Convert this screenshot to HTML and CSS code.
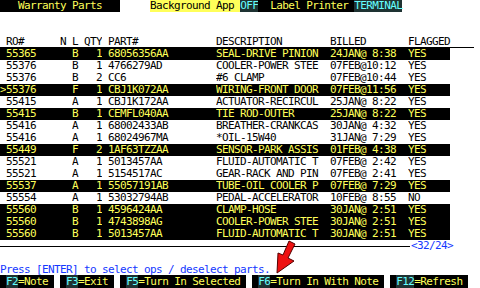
FILE: index.html
```html
<!DOCTYPE html>
<html>
<head>
<meta charset="utf-8">
<link rel="stylesheet" href="styles.css">
</head>
<body>
<div class="screen">
  <div class="line title"><span class="blk">   Warranty Parts   </span>     <span class="inv">Background App </span><span class="val">OFF</span><span class="blk">  Label Printer </span><span class="val">TERMINAL</span></div>
  <div class="line"></div>
  <div class="line"></div>
  <div class="grid head"><span></span><span>RO#</span><span>N</span><span>L</span><span>QTY</span><span class="part">PART#</span><span>DESCRIPTION</span><span>BILLED</span><span>FLAGGED</span></div>
  <div class="rows">
    <div class="grid sel"><span></span><span>55365</span><span></span><span>B</span><span class="qty">1</span><span class="part">68056356AA</span><span>SEAL-DRIVE PINION</span><span>24JAN@ 8:38</span><span>YES</span></div>
    <div class="grid"><span></span><span>55376</span><span></span><span>B</span><span class="qty">1</span><span class="part">4766279AD</span><span>COOLER-POWER STEE</span><span>07FEB@10:12</span><span>YES</span></div>
    <div class="grid"><span></span><span>55376</span><span></span><span>B</span><span class="qty">2</span><span class="part">CC6</span><span>#6 CLAMP</span><span>07FEB@10:44</span><span>YES</span></div>
    <div class="grid sel"><span>&gt;</span><span>55376</span><span></span><span>F</span><span class="qty">1</span><span class="part">CBJ1K072AA</span><span>WIRING-FRONT DOOR</span><span>07FEB@11:56</span><span>YES</span></div>
    <div class="grid"><span></span><span>55415</span><span></span><span>A</span><span class="qty">1</span><span class="part">CBJ1K172AA</span><span>ACTUATOR-RECIRCUL</span><span>25JAN@ 8:22</span><span>YES</span></div>
    <div class="grid sel"><span></span><span>55415</span><span></span><span>B</span><span class="qty">1</span><span class="part">CEMFL040AA</span><span>TIE ROD-OUTER</span><span>25JAN@ 8:22</span><span>YES</span></div>
    <div class="grid"><span></span><span>55416</span><span></span><span>A</span><span class="qty">1</span><span class="part">68002433AB</span><span>BREATHER-CRANKCAS</span><span>30JAN@ 4:32</span><span>YES</span></div>
    <div class="grid"><span></span><span>55416</span><span></span><span>A</span><span class="qty">1</span><span class="part">68024967MA</span><span>*OIL-15W40</span><span>31JAN@ 7:29</span><span>YES</span></div>
    <div class="grid sel"><span></span><span>55449</span><span></span><span>F</span><span class="qty">2</span><span class="part">1AF63TZZAA</span><span>SENSOR-PARK ASSIS</span><span>01FEB@ 4:38</span><span>YES</span></div>
    <div class="grid"><span></span><span>55521</span><span></span><span>A</span><span class="qty">1</span><span class="part">5013457AA</span><span>FLUID-AUTOMATIC T</span><span>07FEB@ 2:42</span><span>YES</span></div>
    <div class="grid"><span></span><span>55521</span><span></span><span>A</span><span class="qty">1</span><span class="part">5154517AC</span><span>GEAR-RACK AND PIN</span><span>07FEB@ 2:41</span><span>YES</span></div>
    <div class="grid sel"><span></span><span>55537</span><span></span><span>A</span><span class="qty">1</span><span class="part">55057191AB</span><span>TUBE-OIL COOLER P</span><span>07FEB@ 7:29</span><span>YES</span></div>
    <div class="grid"><span></span><span>55554</span><span></span><span>A</span><span class="qty">1</span><span class="part">53032794AB</span><span>PEDAL-ACCELERATOR</span><span>10FEB@ 8:55</span><span>NO</span></div>
    <div class="grid sel"><span></span><span>55560</span><span></span><span>B</span><span class="qty">1</span><span class="part">4596424AA</span><span>CLAMP-HOSE</span><span>30JAN@ 2:51</span><span>YES</span></div>
    <div class="grid sel"><span></span><span>55560</span><span></span><span>B</span><span class="qty">1</span><span class="part">4743898AG</span><span>COOLER-POWER STEE</span><span>30JAN@ 2:51</span><span>YES</span></div>
    <div class="grid sel"><span></span><span>55560</span><span></span><span>B</span><span class="qty">1</span><span class="part">5013457AA</span><span>FLUID-AUTOMATIC T</span><span>30JAN@ 2:51</span><span>YES</span></div>
  </div>
  <div class="line pager"><span class="rule"></span><span class="blue">&lt;32/24&gt;</span></div>
  <div class="line"></div>
  <div class="line blue">Press [ENTER] to select ops / deselect parts.</div>
  <div class="line fkeys"><span class="blk"> <span class="key">F2</span>=Note </span> <span class="blk"> <span class="key">F3</span>=Exit </span> <span class="blk"> <span class="key">F5</span>=Turn In Selected </span> <span class="blk"> <span class="key">F6</span>=Turn In With Note </span> <span class="blk"> <span class="key">F12</span>=Refresh </span></div>
</div>
<svg class="arrow" width="40" height="40" viewBox="0 0 40 40">
  <path d="M15 2 L21 5 L14 19 L20 22 L3 34 L4 14 L9 16 Z" fill="#ee1111" stroke="#550000" stroke-width="1" stroke-linejoin="round"/>
</svg>
</body>
</html>
```
FILE: styles.css
```css
* { box-sizing: border-box; margin: 0; padding: 0; }
html, body { width: 480px; height: 288px; overflow: hidden; background: #fff; }
body {
  position: relative;
  font-family: "DejaVu Sans Mono", "Liberation Mono", monospace;
  font-size: 11px;
  letter-spacing: -0.62px;
  color: #000;
}
.screen { display: flex; flex-direction: column; width: 480px; }
.line { height: 12px; line-height: 12px; white-space: pre; display: block; }
.blk { background: #000; color: #ffff5a; }
.inv { background: #ffff5a; color: #000; }
.val { background: #1e3232; color: #66ffff; }
.grid {
  display: grid;
  grid-template-columns: 6px 54px 12px 12px 18px 114px 114px 78px 42px;
  grid-template-rows: 12px;
  height: 12px;
  line-height: 12px;
  width: 450px;
  white-space: pre;
}
.grid span { overflow: hidden; }
.head {
  width: 474px;
  border-bottom: 1px solid #000;
  grid-template-columns: 6px 54px 12px 12px 18px 114px 114px 78px 66px;
  grid-template-rows: 11px;
  line-height: 11px;
}
.qty { text-align: right; }
.grid .part { padding-left: 6px; }
.sel { background: #000; color: #ffff5a; }
.pager { display: flex; align-items: center; }
.rule { display: block; width: 410px; height: 1px; background: #000; }
.blue { color: #1438ff; }
.pager .blue { width: 42px; padding-left: 1px; line-height: 12px; }
.key { background: #1e3232; color: #66ffff; }
.arrow { position: absolute; left: 274px; top: 239px; }
```
